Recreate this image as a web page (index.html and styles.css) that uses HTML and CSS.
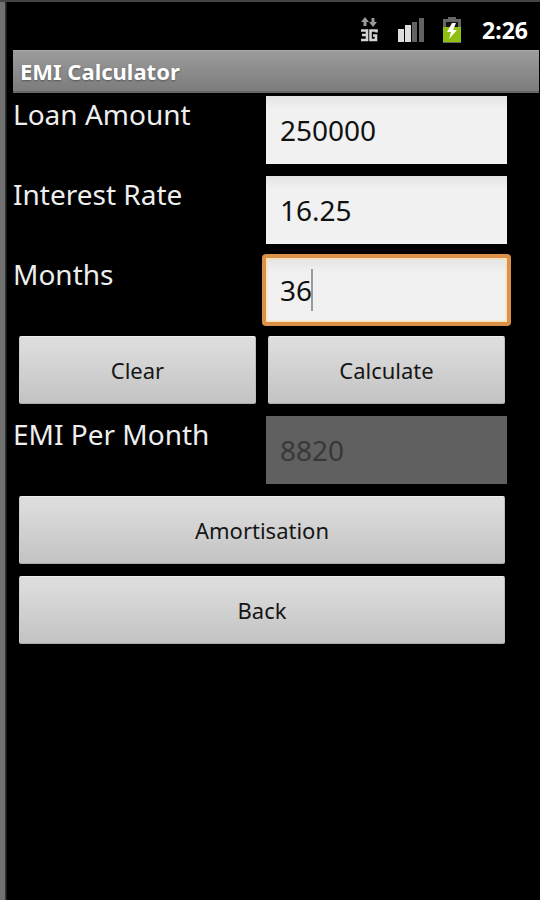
FILE: index.html
```html
<!DOCTYPE html>
<html lang="en">
<head>
    <meta charset="UTF-8">
    <meta name="viewport" content="width=device-width, initial-scale=1.0">
    <title>EMI Calculator</title>
    <link rel="stylesheet" href="styles.css">
</head>
<body>
    <div class="screen">
        <div class="status-bar">
            <svg class="icon-3g" width="18" height="26" viewBox="0 0 18 26" role="img" aria-label="3G">
                <path d="M5 0L9 5H6.500V9H3.500V5H1ZM13 10L9 5H11.500V1H14.500V5H17Z" fill="#999"/>
                <path d="M1 13.500H7V23H1M2 18H7M16.500 15.500V13.500H10.500V23H16V18.500H13" fill="none" stroke="#d4d4d4" stroke-width="2.600"/>
            </svg>
            <svg class="icon-signal" width="26" height="24" viewBox="0 0 26 24" role="img" aria-label="Signal">
                <rect x="0" y="11" width="6" height="13" fill="#ddd"/>
                <rect x="7" y="7" width="6" height="17" fill="#ddd"/>
                <rect x="14" y="4" width="5" height="20" fill="#626262"/>
                <rect x="21" y="0" width="5" height="24" fill="#626262"/>
            </svg>
            <svg class="icon-battery" width="20" height="26" viewBox="0 0 20 26" role="img" aria-label="Battery charging">
                <path d="M1 2H6V0H14V2H19V26H1Z" fill="#666"/>
                <path d="M4 5H16V11H4Z" fill="#111"/>
                <path d="M1 10H19V25H1Z" fill="#8fbf10"/>
                <path d="M10 6L5 15H9L7 22L15 13H11L14 6Z" fill="#fff"/>
            </svg>
            <span class="clock">2:26</span>
        </div>
        <h1 class="title-bar">EMI Calculator</h1>
        <form class="emi-form" id="emi-form">
            <label for="amount">Loan Amount</label>
            <div class="field">
                <input type="text" inputmode="numeric" id="amount" name="amount" value="250000">
            </div>
            <label for="rate">Interest Rate</label>
            <div class="field">
                <input type="text" inputmode="decimal" id="rate" name="rate" value="16.25">
            </div>
            <label for="months">Months</label>
            <div class="field active">
                <input type="text" inputmode="numeric" id="months" name="months" value="36">
                <span class="cursor"></span>
            </div>
            <button type="reset">Clear</button>
            <button type="submit">Calculate</button>
            <label for="emi">EMI Per Month</label>
            <div class="field">
                <input type="text" id="emi" name="emi" value="8820" disabled>
            </div>
            <button type="button" class="wide">Amortisation</button>
            <button type="button" class="wide">Back</button>
        </form>
    </div>

    <script>
        document.getElementById('emi-form').addEventListener('submit', function(event) {
            event.preventDefault();
            const amount = Number(document.getElementById('amount').value);
            const rate = Number(document.getElementById('rate').value) / 1200;
            const months = Number(document.getElementById('months').value);
            const growth = Math.pow(1 + rate, months);
            document.getElementById('emi').value = Math.round(amount * rate * growth / (growth - 1));
        });
    </script>
</body>
</html>
```
FILE: styles.css
```css
* {
    box-sizing: border-box;
}
body {
    font-family: "Noto Sans", "Open Sans", sans-serif;
    background-color: #000;
    margin: 0;
}
.screen {
    min-height: 100vh;
    padding-left: 7px;
    border-top: 2px solid #444;
    background: linear-gradient(to right, #707070 5px, #333 5px, #333 6px, #000 7px);
}
.status-bar {
    display: flex;
    align-items: center;
    justify-content: flex-end;
    height: 48px;
    padding: 8px 12px 0 0;
}
.icon-signal {
    margin-left: 20px;
}
.icon-battery {
    margin-left: 18px;
}
.clock {
    margin-left: 20px;
    color: #fff;
    font-size: 23px;
    font-weight: bold;
}
.title-bar {
    margin: 0 1px 0 6px;
    padding: 0 7px;
    border-top: 1px solid #aaa;
    border-bottom: 2px solid #666;
    background: linear-gradient(#9c9c9c, #7c7c7c);
    color: #fff;
    font-size: 22px;
    line-height: 40px;
    text-shadow: 0 1px 2px #555;
}
.emi-form {
    display: grid;
    grid-template-columns: 1fr 1fr;
    grid-auto-rows: 68px;
    row-gap: 12px;
    padding: 3px 29px 0 6px;
}
label {
    color: #eee;
    font-size: 28px;
    line-height: 36px;
}
.field {
    position: relative;
    margin: 0 4px;
}
.field input {
    width: 100%;
    height: 100%;
    padding: 0 14px;
    border: 0;
    background: linear-gradient(#e4e4e4, #f1f1f1 14px);
    color: #111;
    font-family: inherit;
    font-size: 28px;
    outline: none;
}
.field input:disabled {
    background: #606060;
    color: #383838;
}
/* focused field grows to make room for the orange frame */
.field.active {
    margin: -2px 0;
}
.field.active input {
    border: 4px solid #dc9148;
    border-radius: 4px;
    box-shadow: inset 0 0 2px 1px #ffdfa0;
}
.cursor {
    position: absolute;
    left: 49px;
    top: 15px;
    width: 2px;
    height: 42px;
    background-color: #999;
}
button {
    margin: 0 6px;
    border: 1px solid;
    border-color: #eee #bbb #aaa #ccc;
    border-radius: 2px;
    background: linear-gradient(#dfdfdf, #c3c3c3);
    color: #161616;
    font-family: inherit;
    font-size: 22px;
    cursor: pointer;
}
button:active {
    background: #dc9148;
}
.wide {
    grid-column: 1 / 3;
}
```
